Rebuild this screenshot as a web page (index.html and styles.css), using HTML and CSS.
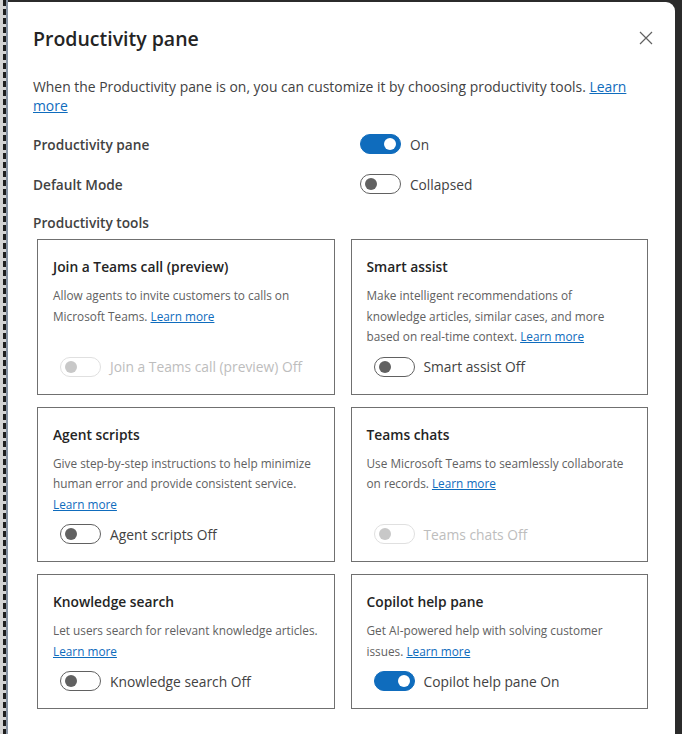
FILE: index.html
```html
<html>
	<head>
		<title>Productivity pane</title>
		<meta charset="utf-8"/>
		<link rel="stylesheet" href="styles.css">
	</head>
	<body>
		<div class="edge"></div>
		<div class="dialog">
			<div class="head">
				<h1>Productivity pane</h1>
				<svg class="close" width="16" height="16" viewBox="0 0 16 16"><path d="M2 2 L14 14 M14 2 L2 14" stroke="#616161" stroke-width="1.2" fill="none"/></svg>
			</div>
			<p class="intro">When the Productivity pane is on, you can customize it by choosing productivity tools. <a href="#">Learn more</a></p>

			<div class="row">
				<span class="label">Productivity pane</span>
				<span class="switch on"><i></i></span>
				<span class="state">On</span>
			</div>
			<div class="row">
				<span class="label">Default Mode</span>
				<span class="switch"><i></i></span>
				<span class="state">Collapsed</span>
			</div>
			<div class="section">Productivity tools</div>

			<div class="tools">
				<div class="card">
					<div class="title">Join a Teams call (preview)</div>
					<div class="desc">Allow agents to invite customers to calls on Microsoft Teams. <a href="#">Learn more</a></div>
					<div class="toggle disabled"><span class="switch"><i></i></span>Join a Teams call (preview) Off</div>
				</div>
				<div class="card">
					<div class="title">Smart assist</div>
					<div class="desc">Make intelligent recommendations of knowledge articles, similar cases, and more based on real-time context. <a href="#">Learn more</a></div>
					<div class="toggle"><span class="switch"><i></i></span>Smart assist Off</div>
				</div>
				<div class="card">
					<div class="title">Agent scripts</div>
					<div class="desc">Give step-by-step instructions to help minimize human error and provide consistent service. <a href="#">Learn more</a></div>
					<div class="toggle"><span class="switch"><i></i></span>Agent scripts Off</div>
				</div>
				<div class="card">
					<div class="title">Teams chats</div>
					<div class="desc">Use Microsoft Teams to seamlessly collaborate on records. <a href="#">Learn more</a></div>
					<div class="toggle disabled"><span class="switch"><i></i></span>Teams chats Off</div>
				</div>
				<div class="card">
					<div class="title">Knowledge search</div>
					<div class="desc">Let users search for relevant knowledge articles. <a href="#">Learn more</a></div>
					<div class="toggle"><span class="switch"><i></i></span>Knowledge search Off</div>
				</div>
				<div class="card">
					<div class="title">Copilot help pane</div>
					<div class="desc">Get AI-powered help with solving customer issues. <a href="#">Learn more</a></div>
					<div class="toggle"><span class="switch on"><i></i></span>Copilot help pane On</div>
				</div>
			</div>
		</div>
	</body>
</html>
```

FILE: styles.css
```css
body {
	margin: 0;
	height: 734px;
	overflow: hidden;
	display: flex;
	background-color: #2b2b2b;
	font-family: "Open Sans", "Noto Sans", sans-serif;
	color: #242424;
}

.edge {
	width: 3px;
	border-left: 3px solid #d4d4d4;
	border-right: 2px solid #8793a3;
	background: repeating-linear-gradient(to bottom, #1e1e1e 0 6px, #d4d4d4 6px 9px);
}

.dialog {
	flex: 1;
	margin-top: 2px;
	margin-right: 7px;
	background-color: white;
	border-radius: 0 9px 0 0;
	padding: 20px 23px 0 25px;
}

.head {
	display: flex;
	align-items: center;
	justify-content: space-between;
	height: 32px;
}

h1 {
	margin: 0;
	font-size: 19.5px;
	font-weight: 600;
}

.close {
	margin-right: -2px;
}

.intro {
	margin: 23px 0 9px 0;
	font-size: 13.9px;
	line-height: 19px;
	color: #424242;
}

a {
	color: #0f6cbd;
}

.row {
	display: flex;
	align-items: center;
	height: 40px;
	font-size: 13.7px;
	font-weight: 600;
	color: #424242;
}

.row:first-of-type {
	margin-top: -1px;
}

.label {
	width: 327px;
}

.state {
	font-weight: normal;
	margin-left: 9px;
}

.section {
	font-size: 13.7px;
	font-weight: 600;
	color: #424242;
	line-height: 20px;
	padding: 9px 0 6px 0;
}

.switch {
	box-sizing: border-box;
	width: 41px;
	height: 20px;
	border: 1px solid #616161;
	border-radius: 10px;
	display: flex;
	align-items: center;
	padding: 0 4px;
	flex-shrink: 0;
}

.switch i {
	width: 12px;
	height: 12px;
	border-radius: 50%;
	background-color: #616161;
}

.switch.on {
	background-color: #0f6cbd;
	border-color: #0f6cbd;
	justify-content: flex-end;
}

.switch.on i {
	background-color: white;
}

.tools {
	display: grid;
	grid-template-columns: 1fr 1fr;
	column-gap: 16px;
	row-gap: 12px;
	margin: 0 4px;
}

.card {
	border: 1px solid #707070;
	padding: 17px 15px 17px 15px;
	display: flex;
	flex-direction: column;
}

.title {
	font-size: 13.8px;
	font-weight: 600;
	line-height: 20px;
	color: #242424;
	margin-bottom: 8px;
}

.desc {
	font-size: 11.8px;
	line-height: 20.5px;
	color: #616161;
}

.toggle {
	margin-top: auto;
	padding-top: 10px;
	display: flex;
	align-items: center;
	gap: 9px;
	padding-left: 7px;
	font-size: 13.8px;
	color: #424242;
}

.toggle.disabled {
	color: #bdbdbd;
}

.toggle.disabled .switch {
	border-color: #e0e0e0;
}

.toggle.disabled .switch i {
	background-color: #c8c8c8;
}
```
